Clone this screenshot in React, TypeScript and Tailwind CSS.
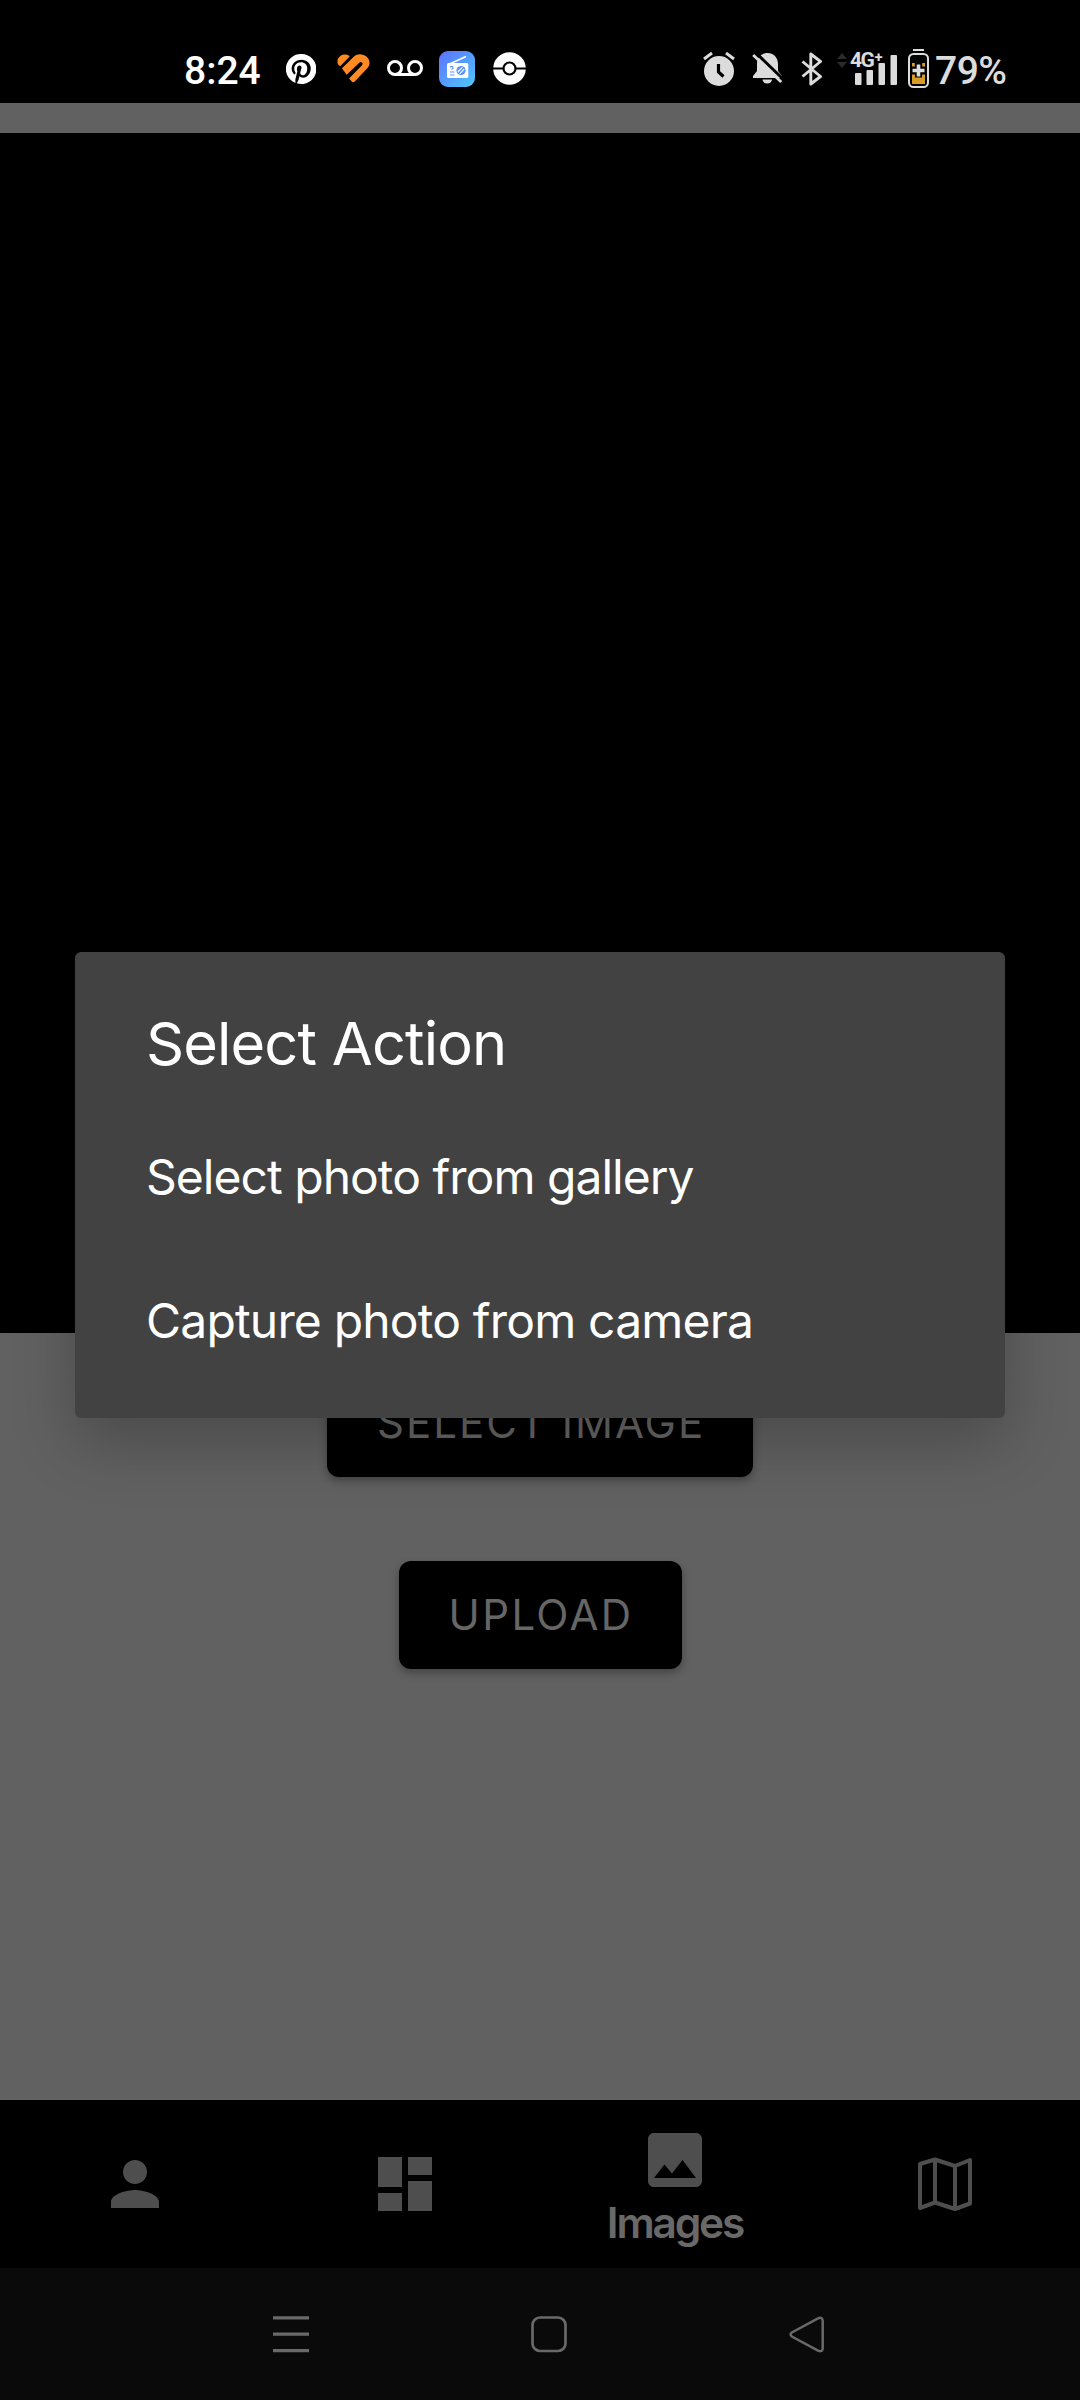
import { MdDashboard, MdImage, MdPerson } from "react-icons/md";

function PinterestIcon() {
  return (
    <svg className="h-[30px] w-[30px]" viewBox="0 0 24 24" fill="#fff">
      <path d="M12 0a12 12 0 0 0-4.400 23.200c-.1-.9-.2-2.400 0-3.400l1.500-6s-.4-.7-.4-1.800c0-1.700 1-2.900 2.200-2.900 1 0 1.500.8 1.500 1.700 0 1-.7 2.600-1 4-.3 1.200.6 2.200 1.800 2.200 2.100 0 3.800-2.200 3.800-5.500 0-2.900-2.100-4.900-5-4.900-3.400 0-5.400 2.600-5.400 5.200 0 1 .4 2.100.9 2.700.1.100.1.200.1.300l-.3 1.400c-.1.200-.2.300-.4.200-1.500-.7-2.400-2.900-2.400-4.600 0-3.800 2.800-7.300 7.900-7.300 4.200 0 7.400 3 7.400 6.900 0 4.100-2.600 7.500-6.200 7.500-1.200 0-2.400-.6-2.700-1.400l-.8 2.800c-.3 1-1 2.300-1.500 3.100A12 12 0 1 0 12 0z" />
    </svg>
  );
}

function HeartIcon() {
  return (
    <svg className="h-[29px] w-[33px]" viewBox="0 0 33 29" fill="none">
      <path d="M.7 9.500C-.6 4 4 .5 8 .6c1.900 0 3.500.6 4.800 1.600L3.200 12.200C2 11.500 1 10.500.7 9.500z" fill="#ff8a24" />
      <path
        d="M5 14.200 17 2.500c3.500-3.400 9.500-2.500 12.700.2 3.800 3.500 3.600 8.300.6 11.500L18 27.300q-1.800 1.700-3.500 0L12 24.600 24.800 11.600q1.500-1.800.2-3-1.200-1.200-3 .3L9.600 20.800z"
        fill="#ff8a24"
      />
    </svg>
  );
}

function VoicemailIcon() {
  return (
    <svg className="h-[17px] w-[36px]" viewBox="0 0 36 17" fill="none" stroke="#fff" strokeWidth="3">
      <circle cx="8" cy="8" r="6.500" />
      <circle cx="28" cy="8" r="6.500" />
      <path d="M8 14.500h20" />
    </svg>
  );
}

function RadioIcon() {
  return (
    <svg className="h-[36px] w-[36px]" viewBox="0 0 36 36" fill="none">
      <defs>
        <linearGradient id="radio" x1="0" y1="0" x2="1" y2="1">
          <stop stopColor="#5c70ff" />
          <stop offset="1" stopColor="#4fc8ff" />
        </linearGradient>
      </defs>
      <rect width="36" height="36" rx="9" fill="url(#radio)" />
      <path d="M10.500 13 27 5.500" stroke="#fff" strokeWidth="1.500" />
      <rect x="8" y="12" width="21.300" height="15" rx="1.500" fill="#fff" />
      <path d="M11 16.200q1.800-1.500 3 0 .5 1.500-1.500 2.300M11 21h4.500M11 24h4.500" stroke="#5a94fb" strokeWidth="1.200" />
      <circle cx="22" cy="19.600" r="4.600" fill="#5a94fb" />
      <path d="m18.800 21 4.600-4.600M20.600 22.800l4.600-4.600" stroke="#fff" strokeWidth="1.100" />
    </svg>
  );
}

function BallIcon() {
  return (
    <svg className="h-[33px] w-[33px]" viewBox="0 0 33 33">
      <circle cx="16.500" cy="16.500" r="16.300" fill="#fff" />
      <path d="M0 16.500h33" stroke="#000" strokeWidth="2.200" />
      <circle cx="16.500" cy="16.500" r="6" fill="#fff" stroke="#000" strokeWidth="2.200" />
    </svg>
  );
}

function AlarmIcon() {
  return (
    <svg className="h-[34px] w-[32px]" viewBox="0 0 32 34" fill="none" stroke="#dcdcdc">
      <circle cx="16" cy="19" r="15" fill="#dcdcdc" stroke="none" />
      <path d="m1 7 8-6M31 7l-8-6" strokeWidth="3" />
      <path d="M15.500 12v8l5 4.500" stroke="#000" strokeWidth="3.200" />
    </svg>
  );
}

function BellOffIcon() {
  return (
    <svg className="h-[31px] w-[31px]" viewBox="0 0 31 31" fill="none">
      <path d="M15.500 0C21.500 0 26 4.500 26 11v7l4 5v2H1v-2l4-5v-7C5 4.500 9.500 0 15.500 0z" fill="#dcdcdc" />
      <path d="M10.500 26.500h9.500a4.700 4 0 0 1-9.500 0z" fill="#dcdcdc" />
      <path d="M3.500-.5 32 27" stroke="#000" strokeWidth="3" />
      <path d="m1.200 2 28 27" stroke="#dcdcdc" strokeWidth="2.800" />
    </svg>
  );
}

function BluetoothIcon() {
  return (
    <svg className="h-[34px] w-[22px]" viewBox="0 0 22 34" fill="none" stroke="#dcdcdc" strokeWidth="2.900">
      <path d="m1.500 9.500 18 15-9.700 7.500V2l9.700 7.500-18 15" strokeLinejoin="round" />
    </svg>
  );
}

function SignalIcon() {
  return (
    <div className="relative h-[36px] w-[61px]">
      <svg className="h-[36px] w-[61px]" viewBox="0 0 61 36" fill="#dcdcdc">
        <path d="m0 8 5-6 5 6zM0 11h10l-5 6z" fill="#2b2b2b" />
        <rect x="18" y="22" width="6.500" height="12" rx="1" />
        <rect x="29.500" y="19" width="6.500" height="15" rx="1" />
        <rect x="41.500" y="12" width="6.500" height="22" rx="1" />
        <rect x="53.500" y="4" width="6.500" height="30" rx="1" />
      </svg>
      <span className="absolute top-[-2px] left-[13px] flex text-[21px] leading-[23px] font-bold tracking-[-1.500px] text-[#dcdcdc]">
        4G<span className="ml-px text-[15px] leading-[16px] font-bold">+</span>
      </span>
    </div>
  );
}

function BatteryIcon() {
  return (
    <svg className="h-[39px] w-[21px]" viewBox="0 0 21 39" fill="none">
      <path d="M5 1h11" stroke="#dcdcdc" strokeWidth="2" />
      <rect x="1" y="5" width="19" height="33" rx="4.500" stroke="#dcdcdc" strokeWidth="2" />
      <path d="M4 14h2.800v3.500H4zM14.200 14H17v3.500h-2.800zM4 25.500h3v3h7v-3h3V35H4z" fill="#d89b28" />
      <path d="M10.500 15.500v12M4.500 21.500h12" stroke="#dcdcdc" strokeWidth="3.600" />
    </svg>
  );
}

function MapIcon() {
  return (
    <svg className="size-[54px]" viewBox="0 0 54 54" fill="none" stroke="currentColor" strokeWidth="4" strokeLinejoin="round">
      <path d="M2 7 17 2.500 37 9l15-6v43.500L37 52l-20-6.500L2 51zM17 2.500v43M37 9v43" />
    </svg>
  );
}

function StatusBar() {
  return (
    <header className="flex h-[103px] shrink-0 items-center justify-between bg-black pt-[34px] pr-[73px] pl-[184px] font-[Roboto]">
      <div className="flex items-center">
        <span className="mt-[4px] w-[102px] text-[39px] leading-[46px] font-medium text-white">8:24</span>
        <PinterestIcon />
        <div className="ml-[21px]"><HeartIcon /></div>
        <div className="ml-[17px]"><VoicemailIcon /></div>
        <div className="ml-[16px]"><RadioIcon /></div>
        <div className="ml-[18px]"><BallIcon /></div>
      </div>
      <div className="flex items-center">
        <AlarmIcon />
        <div className="ml-[17px]"><BellOffIcon /></div>
        <div className="ml-[18px]"><BluetoothIcon /></div>
        <div className="ml-[14px]"><SignalIcon /></div>
        <div className="ml-[10px]"><BatteryIcon /></div>
        <span className="mt-[4px] ml-[6px] w-[72px] text-[39px] leading-[46px] font-medium tracking-[-0.500px] text-[#dcdcdc]">79%</span>
      </div>
    </header>
  );
}

const buttonClass =
  "flex h-[108px] items-center rounded-[12px] bg-black pb-[1px] text-[42px] leading-[50px] text-[#666666] shadow-[0_4px_8px_rgba(0,0,0,0.3)]";

function TabBar() {
  return (
    <nav className="grid h-[168px] shrink-0 grid-cols-4 bg-black text-[#4e4e4e]">
      <div className="flex items-center justify-center">
        <MdPerson className="size-[72px]" />
      </div>
      <div className="flex items-center justify-center">
        <MdDashboard className="size-[72px]" />
      </div>
      <div className="flex flex-col items-center pt-[24px]">
        <MdImage className="size-[72px]" />
        <span className="mt-[1px] text-[42.500px] leading-[52px] font-semibold tracking-[-2.200px] text-[#696969]">Images</span>
      </div>
      <div className="flex items-center justify-center">
        <MapIcon />
      </div>
    </nav>
  );
}

function SystemNav() {
  return (
    <footer className="flex h-[132px] shrink-0 items-center gap-[222px] bg-[#0a0a0a] pl-[273px]">
      <svg className="h-[37px] w-[36px]" viewBox="0 0 36 37" stroke="#696969" strokeWidth="3.200">
        <path d="M0 1.800h36M0 18.200h36M0 34.600h36" />
      </svg>
      <svg className="h-[37px] w-[36px]" viewBox="0 0 36 37" fill="none" stroke="#696969" strokeWidth="2.700">
        <rect x="1.500" y="1.500" width="33" height="33.500" rx="7.500" />
      </svg>
      <svg className="h-[37px] w-[36px]" viewBox="0 0 36 37" fill="none" stroke="#696969" strokeWidth="2.500">
        <path d="M2.800 16.500 29 2.300q4.500-1.800 4.700 2.500v27.500q-.3 4.200-4.700 2.400L2.800 20.500q-2.400-2 0-4z" />
      </svg>
    </footer>
  );
}

function ActionDialog() {
  return (
    <section
      role="dialog"
      className="absolute top-[952px] left-[75px] flex h-[466px] w-[930px] flex-col items-start rounded-[6px] bg-[#424242] pt-[55px] pl-[71px] text-white shadow-[0_24px_64px_rgba(0,0,0,0.24)]"
    >
      <h2 className="text-[59.500px] leading-[72px] tracking-[-0.900px]">Select Action</h2>
      <p className="mt-[26px] flex h-[144px] items-center text-[48px] leading-[58px] tracking-[-0.970px]">Select photo from gallery</p>
      <p className="flex h-[144px] items-center text-[48px] leading-[58px] tracking-[-0.820px]">Capture photo from camera</p>
    </section>
  );
}

export default function App() {
  return (
    <div className="relative flex h-[2400px] w-[1080px] flex-col overflow-hidden bg-[#616161] font-[Inter,sans-serif]">
      <StatusBar />
      <main className="flex flex-1 flex-col items-center pt-[30px]">
        <div className="h-[1200px] w-full bg-black" />
        <div className="flex flex-col items-center gap-[84px] pt-[36px]">
          <button className={`${buttonClass} w-[426px] pl-[50px] tracking-[2px]`}>SELECT IMAGE</button>
          <button className={`${buttonClass} w-[283px] pl-[50px] tracking-[2.400px]`}>UPLOAD</button>
        </div>
      </main>
      <TabBar />
      <SystemNav />
      <ActionDialog />
    </div>
  );
}
